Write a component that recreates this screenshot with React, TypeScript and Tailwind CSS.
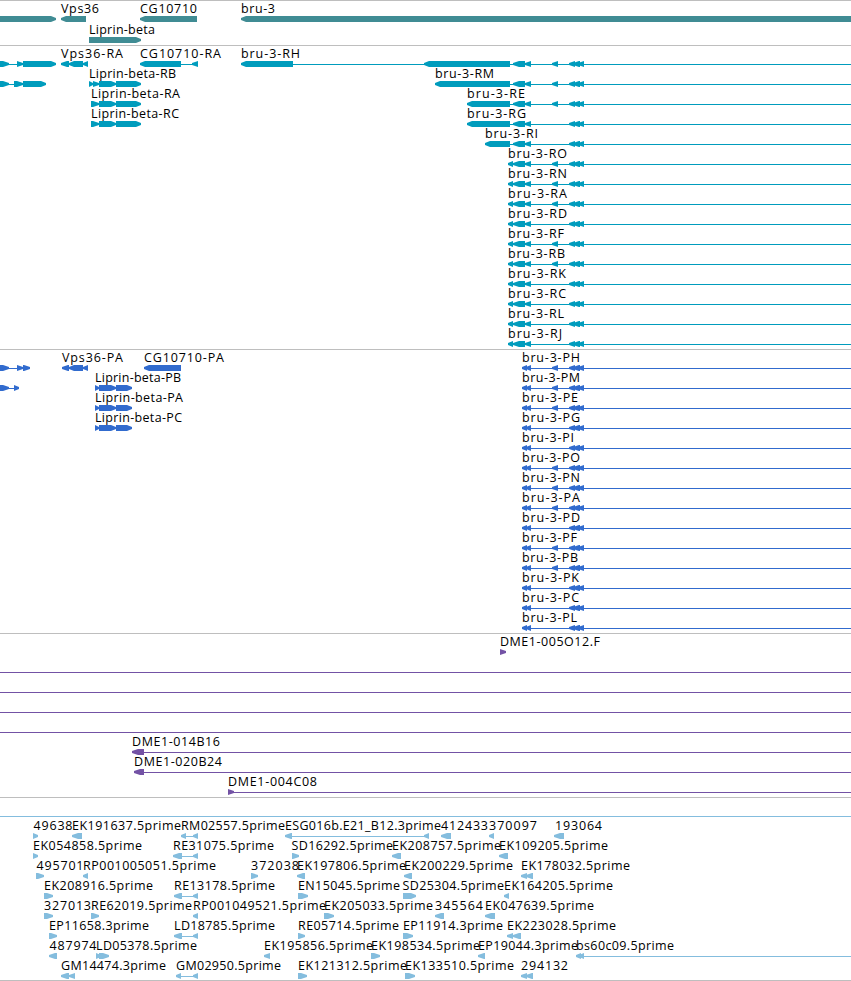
type Label = [text: string, x: number, width: number];
// [start, end, direction], direction -1 points left, 1 points right
type Block = [from: number, to: number, dir: -1 | 1];

interface Row {
  y: number;
  labels?: Label[];
  blocks?: Block[];
  lines?: [number, number][];
}

interface TrackProps {
  top: number;
  height: number;
  color: string;
  rows: Row[];
}

const WIDTH = 851;

function blockPoints(from: number, to: number, dir: -1 | 1, y: number) {
  const head = Math.min(to - from > 12 ? 5 : 6, to - from);
  const [tip, back] = dir === -1 ? [from, to] : [to, from];
  const neck = tip - dir * head;
  return `${tip},${y - 1} ${neck},${y - 3} ${back},${y - 3} ${back},${y + 3} ${neck},${y + 3} ${tip},${y + 1}`;
}

function Track({ top, height, color, rows }: TrackProps) {
  return (
    <section className="border-t border-[#bebebe]">
      <svg
        width={WIDTH}
        height={height}
        viewBox={`0 ${top} ${WIDTH} ${height}`}
        className="block overflow-hidden font-['Open_Sans','Noto_Sans',sans-serif] text-[12.5px] font-normal"
      >
        {rows.map((row, i) => (
          <g key={i}>
            {row.lines?.map(([x1, x2]) => (
              <rect key={x1} x={x1} y={row.y} width={x2 - x1} height={1} fill={color} />
            ))}
            {row.blocks?.map(([from, to, dir]) => (
              <polygon key={from} points={blockPoints(from, to, dir, row.y)} fill={color} />
            ))}
            {row.labels?.map(([text, x, width]) => (
              <text key={text} x={x} y={row.y - 6} textLength={width} fill="#000">
                {text}
              </text>
            ))}
          </g>
        ))}
      </svg>
    </section>
  );
}

const genes: Row[] = [
  {
    y: 19,
    labels: [['Vps36', 61, 38], ['CG10710', 140, 57], ['bru-3', 241, 34]],
    blocks: [[0, 56, 1], [61, 86, -1], [140, 197, -1], [241, 856, -1]],
  },
  { y: 40, labels: [['Liprin-beta', 89, 66]], blocks: [[89, 141, 1]] },
];

const threeExons: Block[] = [[569, 575, -1], [573, 580, -1], [578, 584, -1]];
const smallExon: Block = [552, 558, -1];
const utrExons: Block[] = [[513, 525, -1], [525, 531, -1]];
const liprinBlocks: Block[] = [[91, 99, 1], [99, 116, 1], [116, 141, 1]];

const transcripts: Row[] = [
  {
    y: 64,
    labels: [['Vps36-RA', 61, 62], ['CG10710-RA', 140, 81], ['bru-3-RH', 241, 59]],
    blocks: [
      [0, 9, 1], [17, 23, 1], [23, 56, 1],
      [61, 69, -1], [69, 83, -1], [83, 88, -1],
      [140, 181, -1], [192, 198, -1],
      [241, 293, -1], [424, 510, -1],
      ...utrExons, smallExon, ...threeExons,
    ],
    lines: [[0, 23], [61, 88], [181, 198], [293, WIDTH]],
  },
  {
    y: 84,
    labels: [['Liprin-beta-RB', 89, 87], ['bru-3-RM', 435, 59]],
    blocks: [
      [0, 9, 1], [14, 23, 1], [23, 46, 1],
      [89, 93, 1], [93, 99, 1], [99, 116, 1], [116, 141, 1],
      [435, 510, -1], ...utrExons, smallExon, ...threeExons,
    ],
    lines: [[0, 23], [510, WIDTH]],
  },
  {
    y: 104,
    labels: [['Liprin-beta-RA', 91, 89], ['bru-3-RE', 467, 58]],
    blocks: [...liprinBlocks, [467, 510, -1], ...utrExons, smallExon, ...threeExons],
    lines: [[510, WIDTH]],
  },
  {
    y: 124,
    labels: [['Liprin-beta-RC', 91, 88], ['bru-3-RG', 467, 59]],
    blocks: [...liprinBlocks, [467, 510, -1], ...utrExons, ...threeExons],
    lines: [[510, WIDTH]],
  },
  {
    y: 144,
    labels: [['bru-3-RI', 485, 53]],
    blocks: [[485, 510, -1], ...utrExons, ...threeExons],
    lines: [[510, WIDTH]],
  },
  ...([
    ['RO', 59, true], ['RN', 59, true], ['RA', 59, true], ['RD', 59, false], ['RF', 56, true],
    ['RB', 57, true], ['RK', 58, false], ['RC', 58, false], ['RL', 56, false], ['RJ', 54, false],
  ] as [string, number, boolean][]).map(([name, width, small], i): Row => ({
    y: 164 + i * 20,
    labels: [[`bru-3-${name}`, 508, width]],
    blocks: [[508, 513, -1], ...utrExons, ...(small ? [smallExon] : []), ...threeExons],
    lines: [[508, WIDTH]],
  })),
];

const polypeptides = ([
  ['PH', 58, true], ['PM', 58, true], ['PE', 56, true], ['PG', 58, false], ['PI', 52, false],
  ['PO', 58, true], ['PN', 58, true], ['PA', 58, true], ['PD', 58, false], ['PF', 55, true],
  ['PB', 56, true], ['PK', 57, false], ['PC', 57, false], ['PL', 55, false],
] as [string, number, boolean][]).map(([name, width, small], i): Row => ({
  y: 368 + i * 20,
  labels: [[`bru-3-${name}`, 522, width]],
  blocks: [[522, 527, -1], [526, 531, -1], ...(small ? [smallExon] : []), ...threeExons],
  lines: [[522, WIDTH]],
}));

const codingBlocks: Block[] = [[95, 99, 1], [99, 116, 1], [116, 132, 1]];

const proteins: Row[] = [
  {
    y: 368,
    labels: [['Vps36-PA', 62, 61], ['CG10710-PA', 144, 80]],
    blocks: [
      [0, 9, 1], [17, 23, 1], [23, 30, 1],
      [62, 69, -1], [69, 83, -1], [83, 88, -1], [144, 181, -1],
    ],
    lines: [[0, 24], [62, 88]],
  },
  { y: 388, labels: [['Liprin-beta-PB', 95, 86]], blocks: [[0, 9, 1], [14, 19, 1], ...codingBlocks], lines: [[0, 15]] },
  { y: 408, labels: [['Liprin-beta-PA', 95, 88]], blocks: codingBlocks },
  { y: 428, labels: [['Liprin-beta-PC', 95, 87]], blocks: codingBlocks },
  ...polypeptides,
];

const clones: Row[] = [
  { y: 652, labels: [['DME1-005O12.F', 500, 100]], blocks: [[500, 506, 1]] },
  { y: 672, lines: [[0, WIDTH]] },
  { y: 692, lines: [[0, WIDTH]] },
  { y: 712, lines: [[0, WIDTH]] },
  { y: 732, lines: [[0, WIDTH]] },
  { y: 752, labels: [['DME1-014B16', 132, 88]], blocks: [[132, 144, -1]], lines: [[144, WIDTH]] },
  { y: 772, labels: [['DME1-020B24', 134, 88]], blocks: [[134, 144, -1]], lines: [[144, WIDTH]] },
  { y: 792, labels: [['DME1-004C08', 228, 89]], blocks: [[228, 234, 1]], lines: [[228, WIDTH]] },
];

const ests: Row[] = [
  { y: 816, lines: [[0, WIDTH]] },
  {
    y: 836,
    labels: [
      ['49638', 33.5, 39], ['EK191637.5prime', 72, 109], ['RM02557.5prime', 181, 104],
      ['ESG016b.E21_B12.3prime', 285, 156], ['412433', 441, 47], ['370097', 489, 48], ['193064', 555, 47],
    ],
    blocks: [
      [33, 38, 1], [72, 82, -1], [181, 186, -1], [193, 198, -1], [285, 292, -1],
      [424, 429, -1], [441, 451, -1], [489, 494, -1], [554, 564, -1],
    ],
    lines: [[181, 198], [285, 429]],
  },
  {
    y: 856,
    labels: [
      ['EK054858.5prime', 33, 109], ['RE31075.5prime', 173, 101], ['SD16292.5prime', 291.5, 101.5],
      ['EK208757.5prime', 392, 109], ['EK109205.5prime', 499, 109],
    ],
    blocks: [[33, 38, 1], [173, 182, -1], [193, 198, -1], [292, 299, 1], [392, 401, -1], [499, 508, -1]],
    lines: [[173, 198]],
  },
  {
    y: 876,
    labels: [
      ['495701', 36.5, 47], ['RP001005051.5prime', 83, 133], ['372038', 251, 48],
      ['EK197806.5prime', 297, 109], ['EK200229.5prime', 404, 109], ['EK178032.5prime', 521, 109],
    ],
    blocks: [[36, 44, 1], [83, 88, -1], [251, 258, 1], [297, 305, -1], [404, 412, -1], [521, 527, -1], [526, 533, -1]],
  },
  {
    y: 896,
    labels: [
      ['EK208916.5prime', 44, 109], ['RE13178.5prime', 174, 101], ['EN15045.5prime', 298, 102],
      ['SD25304.5prime', 402.5, 101.5], ['EK164205.5prime', 504, 109],
    ],
    blocks: [[44, 53, 1], [174, 182, -1], [193, 198, -1], [298, 308, 1], [403, 416, 1], [504, 509, -1]],
    lines: [[174, 198]],
  },
  {
    y: 916,
    labels: [
      ['327013', 44, 47], ['RE62019.5prime', 91, 101], ['RP001049521.5prime', 193, 133],
      ['EK205033.5prime', 324, 109], ['345564', 435, 48], ['EK047639.5prime', 485, 109],
    ],
    blocks: [[44, 53, 1], [91, 99, 1], [193, 198, -1], [324, 334, 1], [435, 444, -1], [485, 495, -1]],
  },
  {
    y: 936,
    labels: [
      ['EP11658.3prime', 49, 100], ['LD18785.5prime', 174, 101], ['RE05714.5prime', 298, 101],
      ['EP11914.3prime', 403, 100], ['EK223028.5prime', 507, 109],
    ],
    blocks: [[49, 57, 1], [174, 182, -1], [193, 198, -1], [298, 305, 1], [403, 413, 1], [507, 513, -1], [513, 521, -1]],
    lines: [[174, 198], [507, 521]],
  },
  {
    y: 956,
    labels: [
      ['487974', 49.5, 47], ['LD05378.5prime', 96, 101], ['EK195856.5prime', 264, 109],
      ['EK198534.5prime', 371, 109], ['EP19044.3prime', 478, 100], ['bs60c09.5prime', 576, 98],
    ],
    blocks: [[49, 57, -1], [96, 101, 1], [99, 109, 1], [264, 270, -1], [371, 380, 1], [478, 485, -1], [576, 581, -1], [579, 584, -1]],
    lines: [[576, WIDTH]],
  },
  {
    y: 976,
    labels: [
      ['GM14474.3prime', 61, 105], ['GM02950.5prime', 176, 105], ['EK121312.5prime', 298, 109],
      ['EK133510.5prime', 405, 109], ['294132', 521, 47],
    ],
    blocks: [[61, 69, -1], [69, 75, -1], [176, 181, -1], [193, 198, -1], [298, 307, 1], [405, 415, 1], [521, 527, -1], [526, 533, -1]],
    lines: [[176, 198]],
  },
];

export default function App() {
  return (
    <main className="flex h-[981px] w-[851px] flex-col overflow-hidden border-b border-[#bebebe] bg-white">
      <Track top={1} height={44} color="#408c94" rows={genes} />
      <Track top={46} height={303} color="#009cbd" rows={transcripts} />
      <Track top={350} height={283} color="#316bce" rows={proteins} />
      <Track top={634} height={163} color="#7352a5" rows={clones} />
      <Track top={798} height={182} color="#84bdde" rows={ests} />
    </main>
  );
}
